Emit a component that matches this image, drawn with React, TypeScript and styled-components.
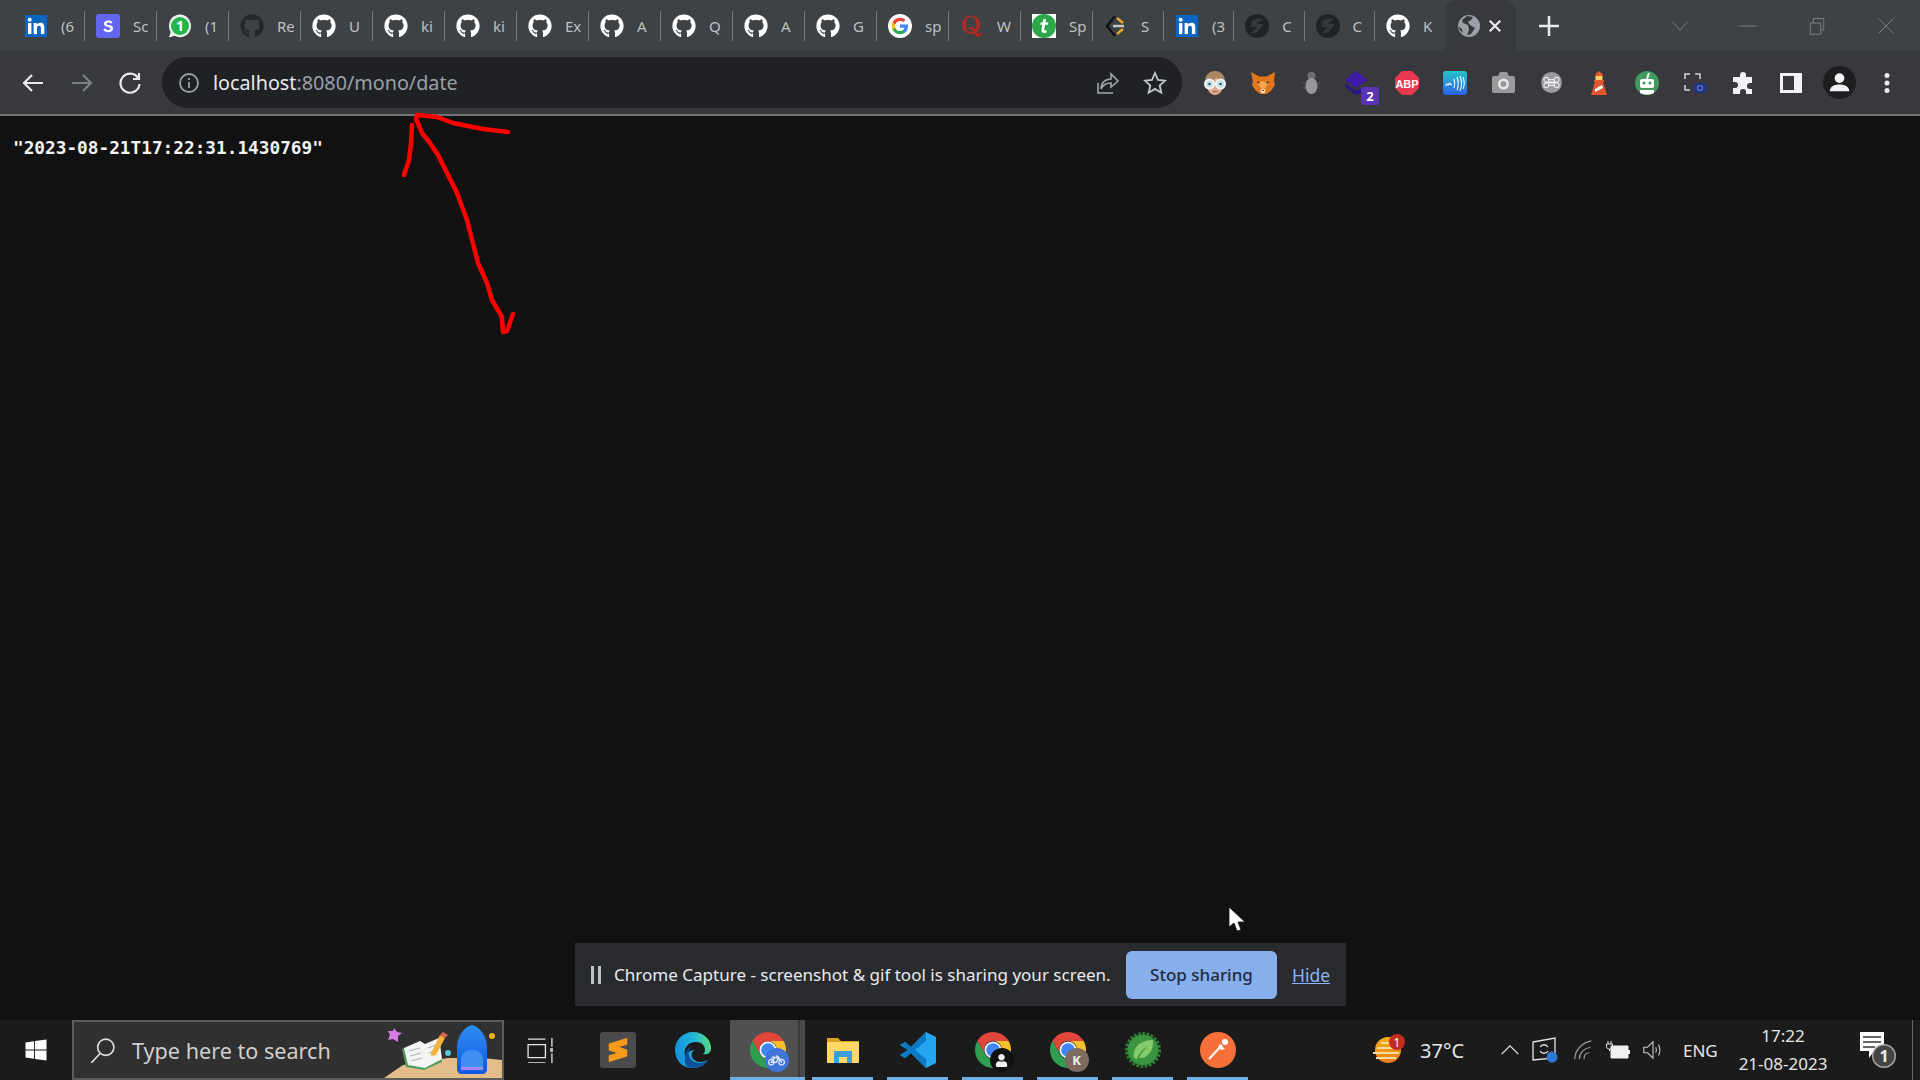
import React from 'react';
import styled, { createGlobalStyle } from 'styled-components';
import { FaGithub, FaQuora, FaWindows, FaBicycle, FaUser } from 'react-icons/fa';
import { SiSublimetext } from 'react-icons/si';

const Global = createGlobalStyle`
    html, body { margin: 0; padding: 0; background: #111; }
    * { box-sizing: border-box; }
`

const Screen = styled.div`
    position: relative;
    width: 1920px;
    height: 1080px;
    overflow: hidden;
    display: flex;
    flex-direction: column;
    font-family: "Noto Sans", "Liberation Sans", sans-serif;
    background: #111;
`

const TabStrip = styled.div`
    height: 51px;
    display: flex;
    align-items: center;
    padding-left: 13px;
    background: #3f4245;
`

const Tab = styled.div<{ $w: number; $plain?: boolean }>`
    width: ${p => p.$w}px;
    height: 30px;
    flex: none;
    display: flex;
    align-items: center;
    gap: 13px;
    padding-left: 11px;
    overflow: hidden;
    border-right: 1px solid ${p => (p.$plain ? 'transparent' : '#75787b')};
`

const FavSlot = styled.div`
    width: 24px;
    height: 24px;
    flex: none;
    display: flex;
    align-items: center;
    justify-content: center;
`

const TabTitle = styled.span`
    max-width: 17px;
    overflow: hidden;
    font-size: 15px;
    color: #bdc1c6;
    white-space: nowrap;
`

const ActiveTab = styled.div`
    width: 71px;
    height: 51px;
    flex: none;
    padding-left: 13px;
    display: flex;
    align-items: center;
    gap: 6px;
    background: #37393c;
    border-radius: 12px 12px 0 0;
`

const NewTab = styled.div`
    width: 36px;
    margin-left: 15px;
    display: flex;
    justify-content: center;
`

const WindowControls = styled.div`
    margin-left: auto;
    display: flex;
    height: 42px;
    align-items: center;
`

const WindowButton = styled.div`
    width: 68.7px;
    display: flex;
    justify-content: center;
`

const Toolbar = styled.div`
    height: 63px;
    display: flex;
    align-items: center;
    padding-left: 9px;
    background: #37393c;
`

const NavButton = styled.div`
    width: 48.5px;
    display: flex;
    justify-content: center;
`

const AddressBar = styled.div`
    width: 1020px;
    height: 51px;
    margin-left: 7.5px;
    display: flex;
    align-items: center;
    padding: 0 15px;
    border-radius: 26px;
    background: #202124;
`

const Url = styled.div`
    margin-left: 12px;
    font-size: 19.75px;
    color: #9aa0a6;
    white-space: nowrap;
`

const UrlHost = styled.span`
    color: #e8eaed;
`

const AddressActions = styled.div`
    margin-left: auto;
    display: flex;
    gap: 24px;
`

const Extensions = styled.div`
    margin-left: 9px;
    display: flex;
`

const Extension = styled.div`
    position: relative;
    width: 48px;
    height: 48px;
    display: flex;
    align-items: center;
    justify-content: center;
`

const CountBadge = styled.span`
    position: absolute;
    right: 4px;
    bottom: 2px;
    width: 18px;
    height: 18px;
    border-radius: 2px;
    background: #5b34b5;
    color: #fff;
    font-size: 13px;
    font-weight: 700;
    line-height: 18px;
    text-align: center;
`

const Divider = styled.div`
    height: 2px;
    background: #6f7275;
`

const Page = styled.main`
    flex: 1;
    padding: 21px 13px;
    background: #111;
`

const Json = styled.pre`
    margin: 0;
    font-family: "DejaVu Sans Mono", "Liberation Mono", monospace;
    font-weight: 700;
    font-size: 17.75px;
    line-height: 22px;
    color: #f2f2f2;
`

const Scribble = styled.svg`
    position: absolute;
    left: 0;
    top: 0;
    pointer-events: none;
`

const Pointer = styled.svg`
    position: absolute;
    left: 1228px;
    top: 906px;
`

const ShareBar = styled.div`
    position: absolute;
    left: 575px;
    top: 943px;
    width: 771px;
    height: 63px;
    display: flex;
    align-items: center;
    padding-left: 16px;
    background: #292a2d;
`

const PauseMark = styled.div`
    width: 10px;
    height: 18px;
    flex: none;
    border-left: 3px solid #bdc1c6;
    border-right: 3px solid #bdc1c6;
`

const ShareText = styled.span`
    margin-left: 13px;
    width: 512px;
    flex: none;
    font-size: 17.05px;
    color: #e8eaed;
    white-space: nowrap;
`

const StopButton = styled.button`
    width: 151px;
    height: 48px;
    flex: none;
    border: 0;
    border-radius: 6px;
    background: #87afec;
    color: #202b40;
    font-family: inherit;
    font-size: 17px;
    font-weight: 500;
`

const HideLink = styled.a`
    margin-left: 15px;
    font-size: 17.5px;
    color: #8ab4f8;
    text-decoration: underline;
`

const Taskbar = styled.footer`
    height: 60px;
    display: flex;
    background: #1b1b1b;
`

const StartButton = styled.div`
    width: 72px;
    flex: none;
    display: flex;
    align-items: center;
    justify-content: center;
`

const SearchBox = styled.div`
    width: 432px;
    flex: none;
    display: flex;
    align-items: center;
    padding-left: 15px;
    border: 2px solid #5c5c5c;
    background: #303030;
`

const SearchText = styled.span`
    margin-left: 17px;
    font-size: 21.6px;
    color: #cfcfcf;
    white-space: nowrap;
`

const SearchArt = styled.svg`
    margin-left: auto;
    flex: none;
`

const TaskView = styled.div`
    width: 72px;
    flex: none;
    display: flex;
    align-items: center;
    justify-content: center;
`

const Pinned = styled.div`
    margin-left: 4px;
    display: flex;
`

const PinnedApp = styled.div<{ $open?: boolean; $active?: boolean }>`
    position: relative;
    width: 75px;
    height: 60px;
    display: flex;
    align-items: center;
    justify-content: center;
    background: ${p => (p.$active ? 'linear-gradient(90deg, #505050 0 68px, #3a3a3a 68px 70px, #484848 70px)' : 'transparent')};

    &::after {
        content: '';
        display: ${p => (p.$open ? 'block' : 'none')};
        position: absolute;
        bottom: 0;
        left: ${p => (p.$active ? '0' : '7px')};
        right: ${p => (p.$active ? '0' : '7px')};
        height: 3px;
        background: #6fb1e6;
    }
`

const AppIcon = styled.div`
    position: relative;
    width: 36px;
    height: 36px;
    display: flex;
    align-items: center;
    justify-content: center;
`

const SublimeTile = styled(AppIcon)`
    border-radius: 3px;
    background: #4b4b4b;
`

const AppBadge = styled.div<{ $bg: string }>`
    position: absolute;
    right: -3px;
    bottom: -4px;
    width: 24px;
    height: 24px;
    border-radius: 50%;
    display: flex;
    align-items: center;
    justify-content: center;
    background: ${p => p.$bg};
    color: #eee;
    font-size: 13px;
    font-weight: 700;
`

const Tray = styled.div`
    margin-left: auto;
    display: flex;
    align-items: center;
    color: #e6e6e6;
`

const WeatherIcon = styled.div`
    width: 31px;
    height: 31px;
    margin-top: -2px;
    display: flex;
`

const Temperature = styled.span`
    width: 72px;
    margin-left: 16px;
    font-size: 20px;
`

const TraySlot = styled.div<{ $w: number }>`
    width: ${p => p.$w}px;
    display: flex;
    justify-content: center;
`

const Language = styled.span`
    width: 40px;
    margin-left: 7px;
    font-size: 17px;
`

const Clock = styled.div`
    width: 120px;
    display: flex;
    flex-direction: column;
    align-items: center;
    gap: 6px;
    font-size: 17px;
    line-height: 22px;
`

const NotifySlot = styled.div`
    width: 69px;
    display: flex;
    justify-content: center;
`

const ShowDesktop = styled.div`
    width: 8px;
    height: 60px;
    border-left: 1px solid #666;
`

const Github = ({ dark }: { dark?: boolean }) => (
    <FaGithub size={24} color={dark ? '#23272a' : '#fff'} />
)

const Linkedin = () => (
    <svg width="22" height="22" viewBox="0 0 22 22">
        <rect width="22" height="22" fill="#0a66c2" />
        <rect x="3" y="8" width="3.4" height="11" fill="#fff" />
        <circle cx="4.7" cy="4.8" r="2" fill="#fff" />
        <path d="M8.6 8h3.2v1.6c.7-1.1 1.9-1.9 3.5-1.9 3 0 4 2 4 4.8V19h-3.4v-5.7c0-1.4-.4-2.6-1.9-2.6s-2 1.2-2 2.6V19H8.6z" fill="#fff" />
    </svg>
)

const STile = () => (
    <svg width="24" height="24" viewBox="0 0 24 24">
        <rect width="24" height="24" rx="3" fill="#6366f1" />
        <path d="M16.5 8.6C15.8 7.2 14.2 6.6 12.2 6.6c-2.5 0-4.2 1.3-4.2 3.1 0 4 6.6 2.4 6.6 4.9 0 .9-1 1.4-2.3 1.4-1.5 0-2.7-.7-3.4-1.8l-1.7 1.6c1 1.5 2.9 2.4 5.1 2.4 2.8 0 4.800-1.400 4.800-3.700 0-4.200-6.600-2.600-6.600-4.900 0-.8.900-1.200 1.900-1.200 1.200 0 2.100.5 2.600 1.400z" fill="#fff" />
    </svg>
)

const Whatsapp = () => (
    <svg width="24" height="24" viewBox="0 0 24 24">
        <path d="M12 .5C5.500 .5 1 5.500 1 12c0 2.200.6 4.300 1.700 6L1 23.500l5.600-1.700c1.600.9 3.400 1.400 5.400 1.400 6.500 0 11-5 11-11.200S18.500.5 12 .5z" fill="#e9f5ec" />
        <circle cx="12" cy="12" r="9" fill="#25b44c" />
        <text x="12" y="17" textAnchor="middle" fontSize="14" fontWeight="700" fill="#fff" fontFamily="Noto Sans">1</text>
    </svg>
)

const Google = () => (
    <svg width="24" height="24" viewBox="0 0 24 24">
        <circle cx="12" cy="12" r="12" fill="#fff" />
        <path d="M20 12.2c0-.6 0-1.100-.1-1.600H12v3.100h4.500c-.2 1-.8 1.900-1.700 2.500v2h2.700c1.600-1.500 2.500-3.600 2.500-6z" fill="#4285f4" />
        <path d="M12 20.300c2.200 0 4.100-.7 5.500-2l-2.700-2c-.7.5-1.700.8-2.800.8-2.200 0-4-1.400-4.700-3.400H4.500v2.100c1.400 2.700 4.200 4.500 7.500 4.500z" fill="#34a853" />
        <path d="M7.300 13.700c-.4-1.100-.4-2.300 0-3.400V8.200H4.500c-1 1.900-1 4.700 0 7.600z" fill="#fbbc05" />
        <path d="M12 6.900c1.200 0 2.300.4 3.200 1.200l2.400-2.400C16.100 4.400 14.200 3.700 12 3.700c-3.300 0-6.100 1.800-7.500 4.500l2.800 2.100c.7-2 2.500-3.400 4.700-3.400z" fill="#ea4335" />
    </svg>
)

const TGreen = () => (
    <svg width="24" height="24" viewBox="0 0 24 24">
        <rect width="24" height="24" fill="#fff" />
        <circle cx="12" cy="12" r="12" fill="#2ca84a" />
        <path d="M11.5 5h2.600l-.6 3.500h2.800l-.4 2.200h-2.800l-.9 4.800c-.2 1 .7 1.200 2.600.8l-.4 2.400c-3.500.8-5.400-.2-4.900-3.200l.8-4.800H8.300l.4-2.200h1.900z" fill="#fff" />
    </svg>
)

const SolMark = () => (
    <svg width="24" height="24" viewBox="0 0 24 24" fill="none" strokeWidth="2.4">
        <path d="M11 2 3 12l8 10" stroke="#111" />
        <path d="M13 4l6 5" stroke="#e9a82c" />
        <path d="M13 20l6-5" stroke="#e9a82c" />
        <path d="M9 12h11" stroke="#c7c7c7" />
    </svg>
)

const DarkBolt = () => (
    <svg width="24" height="24" viewBox="0 0 24 24">
        <circle cx="12" cy="12" r="12" fill="#202325" />
        <path d="M6 8c3-4 9-4 12-3l-6 5h6c-2 7-8 10-12 9l6-6H6z" fill="#34383a" />
    </svg>
)

const Globe = () => (
    <svg width="22" height="22" viewBox="0 0 22 22">
        <circle cx="11" cy="11" r="11" fill="#9aa0a6" />
        <path d="M9 1 4 5l1 3 5 2 1 5-2 5 4-1 4-6-5-3-2-3 3-2 2-3z" fill="#37393c" />
        <path d="M0 11l4 3 1 4-3-3z" fill="#37393c" />
    </svg>
)

const Stroke = ({ d, size = 24, color = '#fff', width = 2 }: { d: string; size?: number; color?: string; width?: number }) => (
    <svg width={size} height={size} viewBox="0 0 24 24" fill="none" stroke={color} strokeWidth={width}>
        <path d={d} />
    </svg>
)

const tabs: { title: string; icon: React.ReactNode }[] = [
    { title: '(6', icon: <Linkedin /> },
    { title: 'Sc', icon: <STile /> },
    { title: '(1', icon: <Whatsapp /> },
    { title: 'Re', icon: <Github dark /> },
    { title: 'U', icon: <Github /> },
    { title: 'ki', icon: <Github /> },
    { title: 'ki', icon: <Github /> },
    { title: 'Ex', icon: <Github /> },
    { title: 'A', icon: <Github /> },
    { title: 'Q', icon: <Github /> },
    { title: 'A', icon: <Github /> },
    { title: 'G', icon: <Github /> },
    { title: 'sp', icon: <Google /> },
    { title: 'W', icon: <FaQuora size={24} color="#a82b25" /> },
    { title: 'Sp', icon: <TGreen /> },
    { title: 'S', icon: <SolMark /> },
    { title: '(3', icon: <Linkedin /> },
    { title: 'C', icon: <DarkBolt /> },
    { title: 'C', icon: <DarkBolt /> },
    { title: 'K', icon: <Github /> },
]

// chrome squeezes the last few tabs a little
const tabWidth = (i: number) => (i < 15 ? 72 : i === 15 ? 71 : 70.3)

const Lady = () => (
    <svg width="24" height="24" viewBox="0 0 24 24">
        <path d="M12 0c6 0 10 4 10 11v3H2v-3C2 4 6 0 12 0z" fill="#a98763" />
        <path d="M3 12c1 7 4 12 9 12s8-5 9-12c-4-1-6-4-7-6-2 3-7 5-11 6z" fill="#dba98b" />
        <circle cx="6.5" cy="13" r="4.5" fill="#bfe3e8" stroke="#f4f4f4" strokeWidth="2" />
        <circle cx="17.5" cy="13" r="4.5" fill="#bfe3e8" stroke="#f4f4f4" strokeWidth="2" />
        <circle cx="6.500" cy="13" r="1.200" fill="#2e4a55" />
        <circle cx="17.500" cy="13" r="1.200" fill="#2e4a55" />
        <path d="M9.500 20.500h5" stroke="#a85f4c" strokeWidth="1.200" />
    </svg>
)

const Fox = () => (
    <svg width="24" height="24" viewBox="0 0 26 26">
        <path d="M0 1l9 5h8l9-5-1 10 1 4-4 6-5 4H10l-5-4-4-6 1-4z" fill="#e2761b" />
        <path d="M13 11l-7 2 4 4 3 6 3-6 4-4z" fill="#f3a352" />
        <path d="M10 20h6l-1.500 4h-3z" fill="#f5e6d8" />
        <path d="M11.500 20.500h3l-1.500 1.500z" fill="#222" />
        <circle cx="8" cy="12.500" r="1.100" fill="#222" />
        <circle cx="18" cy="12.500" r="1.100" fill="#222" />
    </svg>
)

const Bug = () => (
    <svg width="17" height="22" viewBox="0 0 17 22">
        <rect x="4.500" y="0" width="8" height="7" rx="3.500" fill="#6f6f6f" />
        <ellipse cx="8.500" cy="14" rx="6" ry="8" fill="#989898" />
        <path d="M0 11h2M15 11h2M0 16h2M15 16h2" stroke="#5f5f5f" />
    </svg>
)

const Stack = () => (
    <svg width="24" height="24" viewBox="0 0 24 24" style={{ marginRight: 4 }}>
        <path d="M11 0 23 9 11 17 0 9z" fill="#3e1ca8" />
        <path d="M0 12l11 8 5-3 3 4-8 3L0 16z" fill="#2c1585" />
    </svg>
)

const Abp = () => (
    <svg width="24" height="24" viewBox="0 0 24 24">
        <path d="M7 0h10l7 7v10l-7 7H7l-7-7V7z" fill="#e8384f" />
        <text x="12" y="16.500" textAnchor="middle" fontSize="11" fontWeight="700" fill="#fff" fontFamily="Liberation Sans">ABP</text>
    </svg>
)

const WaveTile = () => (
    <svg width="24" height="24" viewBox="0 0 24 24">
        <defs>
            <linearGradient id="waveBg" x1="0" y1="0" x2="0" y2="1">
                <stop offset="0" stopColor="#27c3c7" />
                <stop offset="1" stopColor="#2c62e8" />
            </linearGradient>
        </defs>
        <rect width="24" height="24" rx="3" fill="url(#waveBg)" />
        <path d="M3 15c1-5 2 1 3-2s1 3 3 0M11 8c1 3 1 6 0 9M14 6c1.500 4 1.500 9 0 13M17 5c2 5 2 10 0 15M20 6c1.500 4 1.500 9 0 12" stroke="#fff" strokeWidth="1.100" fill="none" />
    </svg>
)

const Camera = () => (
    <svg width="23" height="21" viewBox="0 0 23 21">
        <path d="M2 4h4l2-4h7l2 4h4a2 2 0 0 1 2 2v13a2 2 0 0 1-2 2H2a2 2 0 0 1-2-2V6a2 2 0 0 1 2-2z" fill="#9a9a9a" />
        <circle cx="11.500" cy="12" r="5.500" fill="#e8e8e8" />
        <circle cx="11.500" cy="12" r="3" fill="#9a9a9a" />
    </svg>
)

const Command = () => (
    <svg width="21" height="21" viewBox="0 0 22 22">
        <circle cx="11" cy="11" r="11" fill="#9b9b9b" />
        <path d="M8 8h6v6H8zM8 8a2.500 2.500 0 1 0-2.500 2.500H16.500A2.500 2.500 0 1 0 14 8v6a2.500 2.500 0 1 0 2.500-2.500H5.500A2.500 2.500 0 1 0 8 14z" fill="none" stroke="#eee" strokeWidth="1.100" />
    </svg>
)

const Lighthouse = () => (
    <svg width="16" height="24" viewBox="0 0 16 24">
        <path d="M8 0l3.500 3v2h-7V3z" fill="#e8582c" />
        <rect x="4.500" y="5" width="7" height="4" fill="#ffcf6a" />
        <rect x="3" y="9" width="10" height="2" fill="#e8582c" />
        <path d="M4 11h8l4 13H0z" fill="#e2562e" />
        <path d="M4 18l7-4 1 3-8 4z" fill="#fff" />
    </svg>
)

const Robot = () => (
    <svg width="24" height="24" viewBox="0 0 24 24">
        <circle cx="12" cy="12" r="12" fill="#3f9a5c" />
        <rect x="5" y="8" width="14" height="9" rx="2" fill="#fff" />
        <path d="M12 8 14 2" stroke="#fff" strokeWidth="2" />
        <circle cx="9" cy="12" r="1.500" fill="#3f9a5c" />
        <circle cx="15" cy="12" r="1.500" fill="#3f9a5c" />
        <path d="M5 19h14v3c-4 2-10 2-14 0z" fill="#fff" />
    </svg>
)

const ScreenCap = () => (
    <svg width="22" height="20" viewBox="0 0 22 20" fill="none">
        <path d="M1 6V1h5M11 1h5v5M1 12v5h5" stroke="#d8d8d8" strokeWidth="1.500" />
        <rect x="10" y="10" width="12" height="10" rx="1" fill="#223580" />
        <circle cx="16" cy="15" r="2.500" stroke="#6a83e0" strokeWidth="1.100" />
    </svg>
)

const Puzzle = () => (
    <svg width="22" height="22" viewBox="0 0 22 22" fill="#f1f3f4">
        <path d="M8 3a3 3 0 0 1 6 0v2h6v6h-2a3 3 0 0 0 0 6h2v5h-6v-2a3 3 0 0 0-6 0v2H1v-6h2a3 3 0 0 0 0-6H1V5h7z" />
    </svg>
)

const SidePanel = () => (
    <svg width="22" height="20" viewBox="0 0 22 20">
        <path d="M0 0h22v20H0zM3 3v14h11V3z" fill="#f1f3f4" fillRule="evenodd" />
    </svg>
)

const Profile = () => (
    <svg width="33" height="33" viewBox="0 0 34 34">
        <circle cx="17" cy="17" r="17" fill="#1d1e20" />
        <circle cx="17" cy="12.500" r="5" fill="#f1f3f4" />
        <path d="M7 26c0-5 5-7 10-7s10 2 10 7z" fill="#f1f3f4" />
    </svg>
)

const Dots = () => (
    <svg width="6" height="20" viewBox="0 0 6 20" fill="#e8eaed">
        <circle cx="3" cy="2.500" r="2.500" />
        <circle cx="3" cy="10" r="2.500" />
        <circle cx="3" cy="17.500" r="2.500" />
    </svg>
)

const Chrome = () => (
    <svg width="36" height="36" viewBox="0 0 48 48">
        <path d="M24 0C15 0 7.200 5 3.200 12L13.600 30A12 12 0 0 1 24 12H44.800C40.800 5 33 0 24 0z" fill="#e0463a" />
        <path d="M44.800 12H24A12 12 0 0 1 34.400 30L24 48C37.300 48 48 37.300 48 24 48 19.600 46.800 15.600 44.800 12z" fill="#f6c02d" />
        <path d="M3.200 12C1.200 15.500 0 19.600 0 24 0 37 10.500 47.700 24 48L34.400 30A12 12 0 0 1 13.600 30z" fill="#2f9e50" />
        <circle cx="24" cy="24" r="11.500" fill="#f1f3f4" />
        <circle cx="24" cy="24" r="9" fill="#4285f4" />
    </svg>
)

const Edge = () => (
    <svg width="36" height="36" viewBox="0 0 36 36">
        <defs>
            <linearGradient id="edgeTop" x1="0" y1="0.500" x2="1" y2="0.300">
                <stop offset="0" stopColor="#1590e0" />
                <stop offset="0.6" stopColor="#22b7d8" />
                <stop offset="1" stopColor="#5ede7e" />
            </linearGradient>
        </defs>
        <path d="M18 0C8 0 0 8 0 18c0 10 7 18 17 18 8 0 13-3 16-8-5 3-14 3-16-3-1-3 0-6 3-7-5 0-9 3-10 7C8 16 13 10 21 10c6 0 9 4 9 8 0 2-1 3-2 4 3 1 8 0 8-6C36 7 28 0 18 0z" fill="url(#edgeTop)" />
        <path d="M10 25c0-6 4-11 10-12-6 1-8 7-5 13 3 5 11 7 18 2-3 5-8 8-16 8-5 0-8-3-7-11z" fill="#0c4f9a" />
    </svg>
)

const Folder = () => (
    <svg width="32" height="26" viewBox="0 0 32 26">
        <path d="M0 1h11l3 3h18v4H0z" fill="#d9a520" />
        <rect y="5" width="32" height="21" rx="1" fill="#ffd866" />
        <path d="M7 26V14h18v12h-5v-6h-8v6z" fill="#3c9fdc" />
    </svg>
)

const VsCode = () => (
    <svg width="36" height="36" viewBox="0 0 36 36">
        <path d="M26 0 36 5v26l-10 5-15-15-6 5-5-3 8-5-8-5 5-3 6 5z" fill="#23a5f0" />
        <path d="M26 0 11 15l-6-5-5 3 8 5-8 5 5 3 6-5 15 15V27L15 18 26 9z" fill="#0e7ac4" />
    </svg>
)

const Spring = () => (
    <svg width="36" height="36" viewBox="0 0 36 36">
        <circle cx="18" cy="18" r="15.500" fill="#2c7f33" stroke="#2c7f33" strokeWidth="5" strokeDasharray="2.500 1.500" />
        <circle cx="18" cy="18" r="15" fill="#3a9440" />
        <path d="M9 26C7 16 15 8 28 8c1 10-5 19-14 18 2-5 5-8 9-12-5 3-9 7-11 13z" fill="#86c96b" />
    </svg>
)

const Postman = () => (
    <svg width="36" height="36" viewBox="0 0 36 36">
        <circle cx="18" cy="18" r="18" fill="#f7703a" />
        <path d="M9 27 22 13" stroke="#fff" strokeWidth="2" />
        <path d="M20 12l5 5-4 1-3-3z" fill="#fff" />
        <circle cx="25" cy="10" r="3" fill="#fff" />
    </svg>
)

const Weather = () => (
    <svg width="32" height="32" viewBox="0 0 32 32" style={{ flex: 'none' }}>
        <defs>
            <linearGradient id="sun" x1="0" y1="0" x2="0" y2="1">
                <stop offset="0" stopColor="#f6b21a" />
                <stop offset="1" stopColor="#e9781a" />
            </linearGradient>
        </defs>
        <circle cx="15" cy="16" r="13" fill="url(#sun)" />
        <path d="M8 9h12M4 14h20M0 19h26M3 24h20" stroke="#f4dca0" strokeWidth="2" />
        <circle cx="24" cy="8" r="8" fill="#c62a20" />
        <text x="24" y="12.500" textAnchor="middle" fontSize="12" fill="#fff" fontFamily="Noto Sans">1</text>
    </svg>
)

const Notification = () => (
    <svg width="36" height="36" viewBox="0 0 36 36">
        <path d="M0 0h24v19H14l-5 7v-7H0z" fill="#fff" />
        <path d="M3 5h18M3 10h18M3 15h12" stroke="#333" strokeWidth="1.500" />
        <circle cx="24" cy="24" r="11.300" fill="#444" stroke="#aaa" strokeWidth="1.400" />
        <text x="24" y="30" textAnchor="middle" fontSize="16" fontWeight="700" fill="#eee" fontFamily="Noto Sans">1</text>
    </svg>
)

const TrayStatus = () => (
    <svg width="26" height="26" viewBox="0 0 26 26" fill="none">
        <path d="M1 5 23 1v20L1 23z" stroke="#e6e6e6" strokeWidth="1.300" />
        <path d="M8 10c2-3 6-3 8 0M16 14c-2 3-6 3-8 0" stroke="#e6e6e6" strokeWidth="1.300" />
        <circle cx="20" cy="20" r="5.500" fill="#2f77d0" />
    </svg>
)

const Battery = () => (
    <svg width="24" height="18" viewBox="0 0 24 18" fill="none">
        <path d="M2 0v3M5 0v3M.5 3h6v2c0 2-1 3-3 3s-3-1-3-3zM3.500 8v2" stroke="#e6e6e6" strokeWidth="1" />
        <path d="M5 5h17v12H5z" fill="#f0f0f0" stroke="#f0f0f0" />
        <rect x="22" y="9" width="2" height="4" fill="#f0f0f0" />
    </svg>
)

function App() {
    return (
        <Screen>
            <Global />
            <TabStrip>
                {tabs.map((tab, i) => (
                    <Tab key={i} $w={tabWidth(i)} $plain={i === tabs.length - 1}>
                        <FavSlot>{tab.icon}</FavSlot>
                        <TabTitle>{tab.title}</TabTitle>
                    </Tab>
                ))}
                <ActiveTab>
                    <Globe />
                    <Stroke size={18} width={3} color="#e8eaed" d="M5 5l14 14M19 5 5 19" />
                </ActiveTab>
                <NewTab><Stroke size={24} width={2.5} color="#e8eaed" d="M12 2v20M2 12h20" /></NewTab>
                <WindowControls>
                    <WindowButton><Stroke size={18} width={1} color="#8d9094" d="M2 6l10 12L22 6" /></WindowButton>
                    <WindowButton><Stroke size={18} width={1} color="#8d9094" d="M1 12h22" /></WindowButton>
                    <WindowButton><Stroke size={18} width={1} color="#8d9094" d="M3 8h14v15H3zM7 8V2h14v15h-4" /></WindowButton>
                    <WindowButton><Stroke size={18} width={1} color="#8d9094" d="M2 2l20 20M22 2 2 22" /></WindowButton>
                </WindowControls>
            </TabStrip>

            <Toolbar>
                <NavButton><Stroke size={24} width={2.2} color="#e8eaed" d="M22 12H3M11 4l-8 8 8 8" /></NavButton>
                <NavButton><Stroke size={24} width={2.2} color="#7d8185" d="M2 12h19M13 4l8 8-8 8" /></NavButton>
                <NavButton><Stroke size={24} width={2.2} color="#e8eaed" d="M20 7a9.500 9.500 0 1 0 1.500 6M21 2v6h-6" /></NavButton>
                <AddressBar>
                    <Stroke size={24} width={1.8} color="#9aa0a6" d="M12 3a9 9 0 1 0 0 18 9 9 0 0 0 0-18zM12 11v6M12 7v2" />
                    <Url><UrlHost>localhost</UrlHost>:8080/mono/date</Url>
                    <AddressActions>
                        <Stroke size={24} width={1.6} color="#a0a4a8" d="M3 12v10h15M6 18c0-6 4-10 10-10V3l7 7-7 6v-4c-4 0-8 2-10 6z" />
                        <Stroke size={24} width={1.8} color="#c4c7ca" d="M12 2l3 7 7 .7-5.300 4.800 1.600 7.200-6.300-3.800-6.300 3.800 1.600-7.200L2 9.700 9 9z" />
                    </AddressActions>
                </AddressBar>
                <Extensions>
                    <Extension><Lady /></Extension>
                    <Extension><Fox /></Extension>
                    <Extension><Bug /></Extension>
                    <Extension><Stack /><CountBadge>2</CountBadge></Extension>
                    <Extension><Abp /></Extension>
                    <Extension><WaveTile /></Extension>
                    <Extension><Camera /></Extension>
                    <Extension><Command /></Extension>
                    <Extension><Lighthouse /></Extension>
                    <Extension><Robot /></Extension>
                    <Extension><ScreenCap /></Extension>
                    <Extension><Puzzle /></Extension>
                    <Extension><SidePanel /></Extension>
                    <Extension><Profile /></Extension>
                    <Extension><Dots /></Extension>
                </Extensions>
            </Toolbar>
            <Divider />

            <Page>
                <Json>"2023-08-21T17:22:31.1430769"</Json>
            </Page>

            <Taskbar>
                <StartButton><FaWindows size={24} color="#fff" /></StartButton>
                <SearchBox>
                    <Stroke size={26} width={1.5} color="#e0e0e0" d="M10 15.500 2 24M15.500 2a7.500 7.500 0 1 0 0 15 7.500 7.500 0 0 0 0-15z" />
                    <SearchText>Type here to search</SearchText>
                    <SearchArt width="118" height="56" viewBox="6 2 118 56">
                        <defs>
                            <linearGradient id="bag" x1="0" y1="0" x2="0" y2="1">
                                <stop offset="0" stopColor="#2f8ef5" />
                                <stop offset="1" stopColor="#0f57e0" />
                            </linearGradient>
                        </defs>
                        <path d="M6 58 25 45l45-7h35l19 2v18z" fill="#e3bd8a" />
                        <path d="M16 8l3 4 5 1-4 3 0 6-5-3-5 1 2-5-2-4 5 0z" fill="#d67be8" />
                        <path d="M24 29 42 23l10 3 10-6 2 22-18 8-18-3z" fill="#4f9d5c" />
                        <path d="M26 28 42 21l5 3v24l-17-3zM47 24l14-6 3 21-17 9z" fill="#f4f4f4" />
                        <path d="M31 31l11-3M32 36l11-3M33 41l11-3M50 28l8-3M51 33l8-3" stroke="#a9b4bf" strokeWidth="1" />
                        <path d="M53 33l9-18 5 3-9 17-5 1z" fill="#f3b23a" />
                        <path d="M62 15l3-3 5 3-3 3z" fill="#d9644e" />
                        <circle cx="70" cy="33" r="3" fill="#58c4dc" />
                        <path d="M79 28c0-12 7-21 15-23 8 2 15 11 15 23v21c0 3-2 5-5 5H84c-3 0-5-2-5-5z" fill="url(#bag)" />
                        <path d="M83 40c0-7 5-10 11-10s11 3 11 10v7H83z" fill="#3f90f2" />
                        <path d="M83 47h22v3H83z" fill="#a988ef" />
                        <circle cx="114" cy="16" r="3" fill="#f5b01e" />
                    </SearchArt>
                </SearchBox>
                <TaskView>
                    <Stroke size={26} width={1.2} color="#e6e6e6" d="M1 2h16M1 7h16v12H1zM1 24h16M23 1v8M23 15v9M22 11h2v2h-2z" />
                </TaskView>
                <Pinned>
                    <PinnedApp>
                        <SublimeTile><SiSublimetext size={24} color="#f79a1c" /></SublimeTile>
                    </PinnedApp>
                    <PinnedApp><AppIcon><Edge /></AppIcon></PinnedApp>
                    <PinnedApp $open $active>
                        <AppIcon>
                            <Chrome />
                            <AppBadge $bg="#3f74d8"><FaBicycle size={17} color="#e8eefc" /></AppBadge>
                        </AppIcon>
                    </PinnedApp>
                    <PinnedApp $open><AppIcon><Folder /></AppIcon></PinnedApp>
                    <PinnedApp $open><AppIcon><VsCode /></AppIcon></PinnedApp>
                    <PinnedApp $open>
                        <AppIcon>
                            <Chrome />
                            <AppBadge $bg="#111"><FaUser size={13} color="#eee" /></AppBadge>
                        </AppIcon>
                    </PinnedApp>
                    <PinnedApp $open>
                        <AppIcon>
                            <Chrome />
                            <AppBadge $bg="#7f6a60">K</AppBadge>
                        </AppIcon>
                    </PinnedApp>
                    <PinnedApp $open><AppIcon><Spring /></AppIcon></PinnedApp>
                    <PinnedApp $open><AppIcon><Postman /></AppIcon></PinnedApp>
                </Pinned>
                <Tray>
                    <WeatherIcon><Weather /></WeatherIcon>
                    <Temperature>37°C</Temperature>
                    <TraySlot $w={36}><Stroke size={20} width={1.5} color="#e6e6e6" d="M2 17 12 7l10 10" /></TraySlot>
                    <TraySlot $w={34}><TrayStatus /></TraySlot>
                    <TraySlot $w={44}><Stroke size={22} width={1.3} color="#9a9a9a" d="M2 22C2 12 10 4 20 2M7 22c0-7 5-12 12-13M12 22c0-4 2-7 6-7" /></TraySlot>
                    <TraySlot $w={24}><Battery /></TraySlot>
                    <TraySlot $w={46}><Stroke size={22} width={1.2} color="#c8c8c8" d="M2 9v6h4l6 6V3L6 9zM15 9c1 2 1 4 0 6M18 6c2 4 2 8 0 12" /></TraySlot>
                    <Language>ENG</Language>
                    <Clock>
                        <span>17:22</span>
                        <span>21-08-2023</span>
                    </Clock>
                    <NotifySlot><Notification /></NotifySlot>
                    <ShowDesktop />
                </Tray>
            </Taskbar>

            <Scribble width="1920" height="1080" viewBox="0 0 1920 1080" fill="none" stroke="#f00" strokeWidth="4.5" strokeLinecap="round" strokeLinejoin="round">
                <path d="M508 132 483 129 453 123 437 117 417 115 416 119 422 133 430 143 438 155 457 193 467 220 478 263 487 283 492 300 502 317 503 332 507 331 513 314" />
                <path d="M412 125 411 143 409 160 404 175" />
            </Scribble>

            <ShareBar>
                <PauseMark />
                <ShareText>Chrome Capture - screenshot &amp; gif tool is sharing your screen.</ShareText>
                <StopButton>Stop sharing</StopButton>
                <HideLink href="#">Hide</HideLink>
            </ShareBar>

            <Pointer width="18" height="26" viewBox="0 0 18 26">
                <path d="M1 1v20l5-4 3 8 4-1-3-8h7z" fill="#fff" stroke="#111" strokeWidth="0.8" />
            </Pointer>
        </Screen>
    )
}

export default App
